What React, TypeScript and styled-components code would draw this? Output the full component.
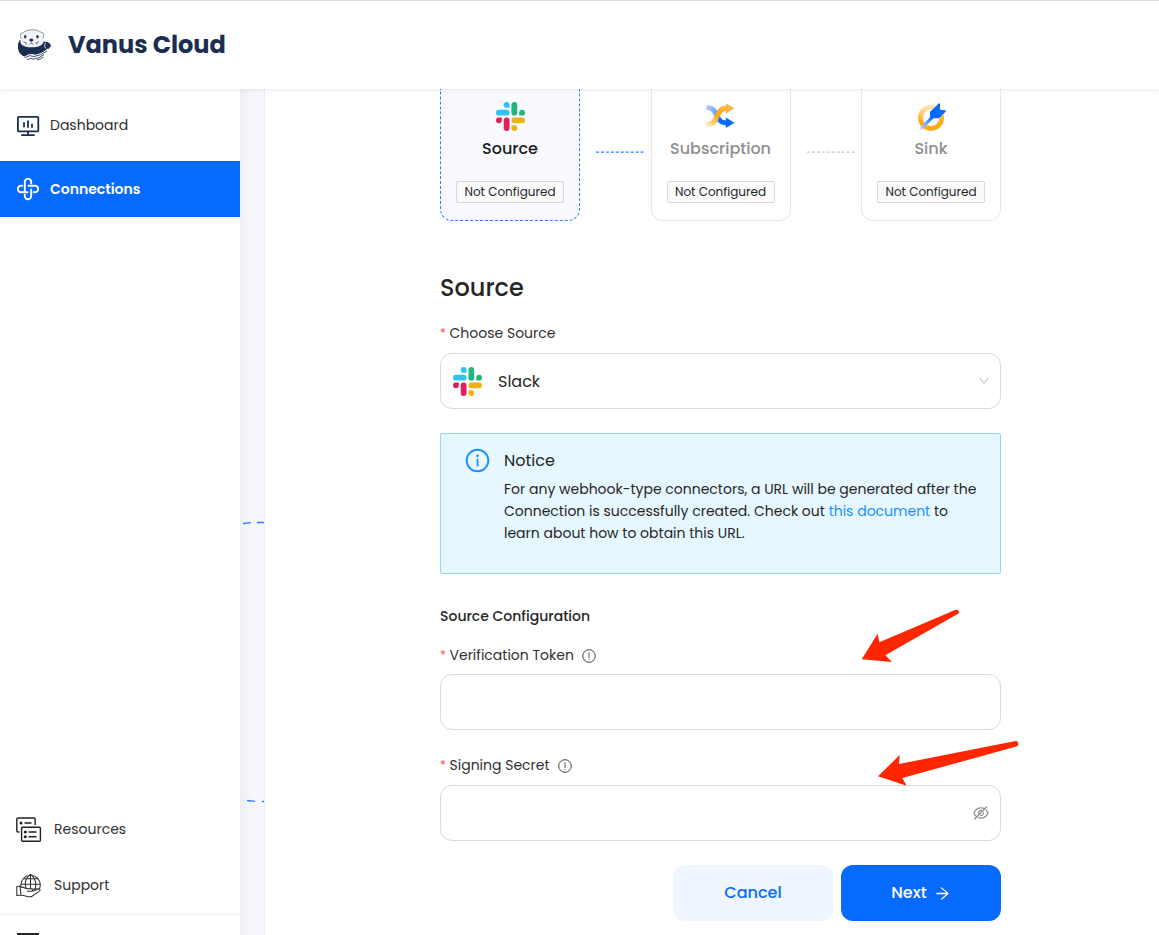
import React from 'react';
import styled, { createGlobalStyle } from 'styled-components';
import { AiOutlineInfoCircle, AiOutlineArrowRight, AiOutlineEyeInvisible, AiOutlineDown } from 'react-icons/ai';

const GlobalStyle = createGlobalStyle`
  * { box-sizing: border-box; }
  body {
    margin: 0;
    background: #fff;
    color: #262626;
    font-family: Poppins, Inter, "Open Sans", sans-serif;
    font-size: 14px;
    line-height: 22px;
  }
`;

const Page = styled.div`
  display: flex;
  flex-direction: column;
  height: 935px;
  overflow: hidden;
`;

const Header = styled.header`
  position: relative;
  z-index: 2;
  flex: none;
  display: flex;
  align-items: center;
  gap: 16px;
  height: 89px;
  padding-left: 17px;
  background: #fff;
  border-top: 1px solid #d9d9d9;
  box-shadow: 0 1px 5px rgba(0, 0, 0, 0.09);
`;

const Text = styled.span`
  white-space: nowrap;
`;

const Brand = styled(Text)`
  color: #1b2d50;
  font-size: 24px;
  font-weight: 700;
`;

const Body = styled.div`
  flex: 1;
  min-height: 0;
  display: flex;
`;

const Sidebar = styled.nav`
  flex: none;
  width: 240px;
  display: flex;
  flex-direction: column;
  padding-top: 8px;
  overflow: hidden;
`;

const NavItem = styled.div<{ $active?: boolean }>`
  flex: none;
  display: flex;
  align-items: center;
  gap: 10px;
  height: 56px;
  padding-left: 16px;
  margin-bottom: 8px;
  color: ${({ $active }) => ($active ? '#fff' : '#303030')};
  background: ${({ $active }) => ($active ? '#066aff' : 'transparent')};
  font-weight: ${({ $active }) => ($active ? 600 : 400)};
`;

const FooterItem = styled(NavItem)`
  gap: 12px;
  margin-bottom: 0;
  padding-bottom: 2px;
`;

const NavBottom = styled.div`
  flex: none;
  margin-top: auto;
`;

const Account = styled.div`
  height: 21px;
  padding: 18px 0 0 17px;
  border-top: 1px solid #ededed;
`;

const AccountMark = styled.div`
  width: 22px;
  height: 3px;
  background: #25262a;
`;

const Gutter = styled.div`
  flex: none;
  width: 25px;
  background: linear-gradient(90deg, #eeeff5, #f5f6fc 10px, #f7f8fd);
  border-right: 1px solid #f0f0f2;
`;

const Main = styled.main`
  flex: 1;
  padding-left: 175px;
`;

const Column = styled.div`
  width: 561px;
  display: flex;
  flex-direction: column;
`;

const Steps = styled.div`
  display: flex;
`;

const StepCard = styled.div<{ $active?: boolean }>`
  width: 140px;
  height: 132px;
  padding-top: 13px;
  display: flex;
  flex-direction: column;
  align-items: center;
  border: 1px ${({ $active }) => ($active ? 'dashed #2680ff' : 'solid #e8e8e8')};
  border-top: 0;
  border-radius: 0 0 12px 12px;
  background: ${({ $active }) => ($active ? '#f8faff' : '#fff')};
  color: ${({ $active }) => ($active ? '#1c1c1c' : '#8f8f8f')};
`;

const StepName = styled(Text)`
  margin-top: 6px;
  font-size: 16px;
  font-weight: 500;
  line-height: 24px;
`;

const Tag = styled(Text)`
  width: 108px;
  height: 22px;
  margin-top: 20px;
  border: 1px solid #d9d9d9;
  border-radius: 2px;
  background: #fafafa;
  color: #262626;
  font-size: 12px;
  line-height: 20px;
  text-align: center;
`;

const Connector = styled.svg`
  flex: none;
  margin: 60px 5.5px 0 16px;
`;

const Title = styled.h2`
  margin: 51px 0 0;
  font-size: 24px;
  font-weight: 500;
  line-height: 32px;
`;

const Label = styled.label<{ $top: number }>`
  display: flex;
  align-items: center;
  height: 22px;
  margin-top: ${({ $top }) => $top}px;
  color: #303030;
`;

const Required = styled.span`
  width: 9.5px;
  color: #ff4d4f;
  font-size: 12px;
`;

const Field = styled.div<{ $top?: number }>`
  height: 56px;
  margin-top: ${({ $top = 9 }) => $top}px;
  padding: 0 10px 0 11.5px;
  display: flex;
  align-items: center;
  border: 1px solid #d9d9d9;
  border-radius: 12px;
  color: #262626;
  font-size: 16px;
`;

const FieldText = styled(Text)`
  margin-left: 16.5px;
  padding-top: 2px;
`;

const FieldEnd = styled.span<{ $color: string }>`
  display: flex;
  margin-left: auto;
  color: ${({ $color }) => $color};
`;

const Notice = styled.section`
  height: 141px;
  margin-top: 24px;
  padding: 14px 0 0 22.5px;
  display: flex;
  gap: 13.5px;
  border: 1px solid #91d5ff;
  border-radius: 2px;
  background: #e6f7ff;
`;

const NoticeIcon = styled(AiOutlineInfoCircle)`
  flex: none;
  margin-top: -1px;
  color: #1890ff;
`;

const NoticeBody = styled.div`
  display: flex;
  flex-direction: column;
  padding-top: 1px;
`;

const NoticeTitle = styled(Text)`
  margin-bottom: 5px;
  font-size: 16px;
  line-height: 24px;
`;

const Link = styled.a`
  color: #1890ff;
`;

const Subtitle = styled(Text)`
  margin-top: 31px;
  font-weight: 500;
`;

const Actions = styled.div`
  display: flex;
  justify-content: flex-end;
  gap: 8px;
  margin-top: 24px;
`;

const Button = styled.button<{ $primary?: boolean }>`
  display: flex;
  align-items: center;
  justify-content: center;
  gap: 7px;
  width: 160px;
  height: 56px;
  padding: 0;
  border: 0;
  border-radius: 12px;
  background: ${({ $primary }) => ($primary ? '#066aff' : '#f0f6ff')};
  color: ${({ $primary }) => ($primary ? '#fff' : '#066aff')};
  font: inherit;
  font-size: 16px;
  font-weight: 500;
`;

const Annotations = styled.svg`
  position: absolute;
  z-index: 3;
  left: 860px;
  top: 605px;
`;

const OtterLogo = () => (
  <svg width="35" height="32" viewBox="0 0 35 32">
    <path d="M3 11C0 14 .2 22 4 25.500c4.500 4 11 2.500 16 0 4-2 8-1 10.500-4.500l3.500-4c0-2.500-3-4.500-6-4l-2-2z" fill="#1b2d50" />
    <path d="M4 9.500C3 6 3 3.500 5.500 4 10-.2 20-.2 24.500 3.500c2.500-.5 2.500 2.500 1.700 5.500 3 6-4 9.300-11.700 9.300S1.500 15.500 4 9.500z" fill="#f1f3f6" />
    <path d="M4 10C3 6 3 3.500 5.500 4 10-.2 20-.2 24.500 3.500c2.500-.5 2.500 2.500 1.700 6" fill="none" stroke="#718096" strokeWidth=".8" />
    <ellipse cx="8.200" cy="7.800" rx="1.200" ry="1.800" fill="#1b2d50" />
    <ellipse cx="20.500" cy="7.800" rx="1.200" ry="1.800" fill="#1b2d50" />
    <ellipse cx="14.300" cy="11" rx="2" ry="1.500" fill="#1b2d50" />
    <path d="M14.300 12v1.800M12.500 15.300q1.800-2 3.600 0M6.500 12.500l3 1.500M22 12.500l-3 1.500M8 15l2-.4M20.500 15l-2-.4" fill="none" stroke="#1b2d50" strokeWidth=".6" />
    <path d="M28.500 14q-1.800 2.700 0 5.400" fill="none" stroke="#fff" strokeWidth=".8" />
    <path d="M9 29q5-3.500 9-1 7-1 14-7" fill="none" stroke="#fff" strokeWidth="4" />
    <path d="M8 28.700q5-3.500 9-1.200 7-1 13-5.500M10 30.700q4-2.200 6.500-.6 6-.8 10.500-4.500M20 31q3.500-.5 6.500-3" fill="none" stroke="#1b2d50" strokeWidth=".85" />
  </svg>
);

const DashboardIcon = () => (
  <svg width="24" height="24" viewBox="0 0 24 24" fill="none" stroke="#1b2d50" strokeWidth="1.800" strokeLinecap="round" strokeLinejoin="round">
    <rect x="1.900" y="3.800" width="20.400" height="14.600" rx=".8" />
    <path d="M12 18.600v3M6 22.200h12M8 10v3.600M12 8.200v5.800M16 11.500v2.500" />
  </svg>
);

const ConnectionsIcon = () => (
  <svg width="24" height="24" viewBox="0 0 24 24" fill="none" stroke="#fff" strokeWidth="1.900" strokeLinecap="round" strokeLinejoin="round">
    <path d="M15.200 6.200V5a3.200 3.200 0 0 0-6.400 0v9.500M17.800 15.200H19a3.200 3.200 0 0 0 0-6.400h-6.500M8.800 17.800V19a3.200 3.200 0 0 0 6.400 0v-6.500M6.200 8.800H5a3.200 3.200 0 0 0 0 6.400h6.500" />
  </svg>
);

const ResourcesIcon = () => (
  <svg width="26" height="26" viewBox="0 0 26 26" fill="none" stroke="#202124" strokeWidth="1.400">
    <path d="M3.500 16H2a1.200 1.200 0 0 1-1.200-1.200V3.200A1.200 1.200 0 0 1 2 2h16a1.200 1.200 0 0 1 1.200 1.200V9" />
    <rect x="5.600" y="11.300" width="18.800" height="14" rx="1" />
    <path d="M8.500 7h7M12.500 16h8M12.500 20.800h8" />
    <g fill="#202124" stroke="none"><circle cx="5" cy="7" r="1.500" /><circle cx="9.300" cy="16" r="1.500" /><circle cx="9.300" cy="20.800" r="1.500" /></g>
  </svg>
);

const SupportIcon = () => (
  <svg width="26" height="26" viewBox="0 0 26 26" fill="none" stroke="#303133" strokeWidth="1.050" strokeLinejoin="round">
    <g transform="translate(0 .8)">
      <path d="M5 14a9.700 9.700 0 1 1 18 3M14.500 1.300V18M14.500 1.300C8 7 8.500 12 10.500 16M14.500 1.300C21 7 20.500 13 18.500 18M7 6h15M5 11.500h19.500M10 16.200h13" />
      <path d="M.8 13.800 4 13.300l1 9-4.200.5zM4.500 14.500C8 13.500 9 16 12 16h3c2 0 2 2.500 0 2.500h-4M16.500 18.500l6-2.200c2-.4 2 1.200.8 2L16 23.500c-3 1.700-6-1-11-1" fill="#fff" />
    </g>
  </svg>
);

const SlackIcon = () => (
  <svg width="29" height="29" viewBox="0 0 30 30">
    <path fill="#2bc4f3" d="M11 0a3 3 0 0 0 0 6h3V3a3 3 0 0 0-3-3M3 8h8a3 3 0 0 1 0 6H3a3 3 0 0 1 0-6" />
    <path fill="#22b67d" d="M30 11a3 3 0 0 0-6 0v3h3a3 3 0 0 0 3-3M22 3v8a3 3 0 0 1-6 0V3a3 3 0 0 1 6 0" />
    <path fill="#ecb20d" d="M19 30a3 3 0 0 0 0-6h-3v3a3 3 0 0 0 3 3M27 22h-8a3 3 0 0 1 0-6h8a3 3 0 0 1 0 6" />
    <path fill="#e21e5b" d="M0 19a3 3 0 0 0 6 0v-3H3a3 3 0 0 0-3 3M8 27v-8a3 3 0 0 1 6 0v8a3 3 0 0 1-6 0" />
  </svg>
);

const ShuffleIcon = () => (
  <svg width="29" height="29" viewBox="0 0 30 30" fill="none">
    <defs>
      <linearGradient id="shuffleBlue"><stop stopColor="#a9c9ff" /><stop offset=".35" stopColor="#83b2ff" /><stop offset=".65" stopColor="#066aff" /></linearGradient>
      <linearGradient id="shuffleGold" x1="0" y1="1" x2="1" y2="0"><stop stopColor="#ffe5b6" /><stop offset=".5" stopColor="#ffa90d" /><stop offset="1" stopColor="#ffb446" /></linearGradient>
    </defs>
    <g transform="translate(0 1)">
      <path d="M.5 5h2.500c8 0 8 15.500 16 15.500h3" stroke="url(#shuffleBlue)" strokeWidth="5" />
      <path d="m20.500 15 9 5.500-9 5.300z" fill="#066aff" />
      <path d="M.5 22h2.500c10 0 7-16.500 17-16.500h2" stroke="url(#shuffleGold)" strokeWidth="5" />
      <path d="m20.500.2 9 5.300-9 5.500z" fill="#ffb446" />
    </g>
  </svg>
);

const PlugIcon = () => (
  <svg width="29" height="29" viewBox="0 0 29 29" fill="none">
    <defs>
      <linearGradient id="ringGold" x1="0" y1="0" x2="0" y2="1"><stop stopColor="#ffe2ac" /><stop offset=".7" stopColor="#ffa90d" /></linearGradient>
      <linearGradient id="plugBlue" gradientUnits="userSpaceOnUse" x1="3" y1="26" x2="20" y2="9"><stop stopColor="#c2d9ff" /><stop offset=".5" stopColor="#438dff" /><stop offset=".65" stopColor="#066aff" /></linearGradient>
    </defs>
    <g transform="translate(0 .7)">
      <circle cx="14" cy="15" r="10.700" stroke="url(#ringGold)" strokeWidth="4.600" />
      <path d="M3 24.500 13 14.500V9L20 2.500 21.500.5 23 1v6l5.500.5.500 1L22 15.500h-5.500L5.500 26.500 3.500 27z" fill="url(#plugBlue)" />
    </g>
  </svg>
);

const HintIcon = styled.svg`
  margin: 1px 0 0 8px;
`;

const Hint = () => (
  <HintIcon width="14" height="14" viewBox="0 0 14 14" fill="none" stroke="#303030">
    <circle cx="7" cy="7" r="6.300" strokeWidth=".9" />
    <path d="M7 3.300v5.700M7 9.900v1" strokeWidth=".8" />
  </HintIcon>
);

const StepLink = ({ color }: { color: string }) => (
  <Connector width="49" height="6"><path d="M0 3.100h49" stroke={color} strokeWidth="1.400" strokeDasharray="3 1.950" /></Connector>
);

interface StepProps { name: string; active?: boolean; icon: React.ReactNode }
const Step = ({ name, active, icon }: StepProps) => (
  <StepCard $active={active}>
    {icon}
    <StepName>{name}</StepName>
    <Tag>Not Configured</Tag>
  </StepCard>
);

export default function App() {
  return (
    <Page>
      <GlobalStyle />
      <Header><OtterLogo /><Brand>Vanus Cloud</Brand></Header>
      <Body>
        <Sidebar>
          <NavItem><DashboardIcon /><Text>Dashboard</Text></NavItem>
          <NavItem $active><ConnectionsIcon /><Text>Connections</Text></NavItem>
          <NavBottom>
            <FooterItem><ResourcesIcon /><Text>Resources</Text></FooterItem>
            <FooterItem><SupportIcon /><Text>Support</Text></FooterItem>
            <Account><AccountMark /></Account>
          </NavBottom>
        </Sidebar>
        <Gutter>
          <svg width="24" height="846" fill="none" stroke="#2680ff">
            <path d="M3 434.500l8-.8M17 433.500h7M7 711.500l8 .8M22 712.500h2" strokeWidth="1.300" />
          </svg>
        </Gutter>
        <Main>
          <Column>
            <Steps>
              <Step name="Source" active icon={<SlackIcon />} />
              <StepLink color="#2680ff" />
              <Step name="Subscription" icon={<ShuffleIcon />} />
              <StepLink color="#c8c8c8" />
              <Step name="Sink" icon={<PlugIcon />} />
            </Steps>
            <Title><Text>Source</Text></Title>
            <Label $top={18}><Required>*</Required><Text>Choose Source</Text></Label>
            <Field>
              <SlackIcon /><FieldText>Slack</FieldText>
              <FieldEnd $color="#bfbfbf"><AiOutlineDown size={12} /></FieldEnd>
            </Field>
            <Notice>
              <NoticeIcon size={27} />
              <NoticeBody>
                <NoticeTitle>Notice</NoticeTitle>
                <Text>For any webhook-type connectors, a URL will be generated after the</Text>
                <Text>Connection is successfully created. Check out <Link>this document</Link> to</Text>
                <Text>learn about how to obtain this URL.</Text>
              </NoticeBody>
            </Notice>
            <Subtitle>Source Configuration</Subtitle>
            <Label $top={17}><Required>*</Required><Text>Verification Token</Text><Hint /></Label>
            <Field $top={8} />
            <Label $top={24}><Required>*</Required><Text>Signing Secret</Text><Hint /></Label>
            <Field><FieldEnd $color="#8c8c8c"><AiOutlineEyeInvisible size={18} /></FieldEnd></Field>
            <Actions>
              <Button><Text>Cancel</Text></Button>
              <Button $primary><Text>Next</Text><AiOutlineArrowRight size={17} /></Button>
            </Actions>
          </Column>
        </Main>
      </Body>
      <Annotations width="164" height="190" fill="#ff2600">
        <path d="M1.700 54.300 17.700 28.700 19.300 37.300 95.700 4.700C98.500 4.300 99.700 6.500 98.500 8.500L25.300 50.300 32 57z" />
        <path d="M18 171.300 39.700 150 39 159 155.700 136c2.500 0 3.500 3.500 1.600 5.300L42.300 173l4.400 7.700z" />
      </Annotations>
    </Page>
  );
}
